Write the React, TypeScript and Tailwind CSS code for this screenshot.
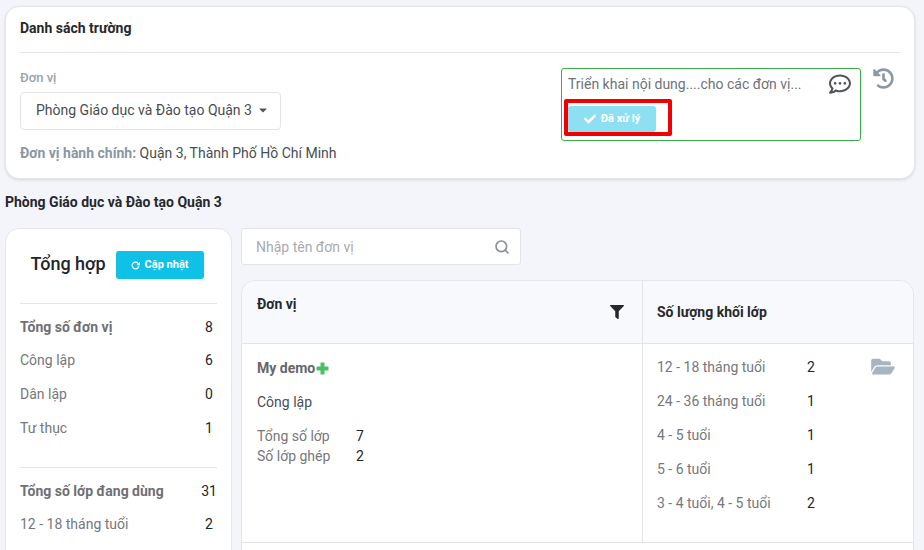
import React from "react";
import { FaHistory, FaRegCommentDots, FaCheck, FaFilter, FaFolderOpen, FaCaretDown } from "react-icons/fa";
import { FiSearch, FiRotateCw } from "react-icons/fi";

const summaryA = [
  ["Công lập", "6"],
  ["Dân lập", "0"],
  ["Tư thục", "1"],
];
const grades = [
  ["12 - 18 tháng tuổi", "2"],
  ["24 - 36 tháng tuổi", "1"],
  ["4 - 5 tuổi", "1"],
  ["5 - 6 tuổi", "1"],
  ["3 - 4 tuổi, 4 - 5 tuổi", "2"],
];

function Row({ label, value, bold }: { label: string; value: string; bold?: boolean }) {
  return (
    <div className={bold ? "flex h-[33px] items-center justify-between" : "flex h-[34px] items-center justify-between"}>
      <span className={bold ? "font-bold text-[#6f6f74]" : "text-[#77777c]"}>{label}</span>
      <span className="w-[16px] text-center text-[#212529]">{value}</span>
    </div>
  );
}

export default function App() {
  return (
    <div className="h-[550px] w-[924px] overflow-hidden bg-[#f3f5fb] pl-[5px] pt-[6px] text-[14px] leading-[20px] text-[#212529] [font-family:Roboto,sans-serif]">
      <div className="h-[173px] w-[910px] rounded-[14px] border border-[#e4e6ea] bg-white px-[14px] shadow-[0_1px_3px_rgba(0,0,0,0.12)]">
        <div className="flex h-[46px] items-center border-b border-[#e2e4e8] pb-[4px] font-bold text-[#26282c]">Danh sách trường</div>
        <div className="flex justify-between">
          <div>
            <div className="mt-[15px] text-[13px] font-medium text-[#9aa3ae]">Đơn vị</div>
            <div className="mt-[4px] flex h-[38px] w-[261px] items-center gap-[6px] rounded border border-[#e2e4e8] pb-[2px] pl-[15px] text-[#4a4d52]">
              Phòng Giáo dục và Đào tạo Quận 3
              <FaCaretDown className="h-[12px] w-[10px] text-[#55585d]" />
            </div>
            <div className="mt-[13px] text-[#4a4d52]">
              <span className="font-bold text-[#8b96a3]">Đơn vị hành chính:</span> Quận 3, Thành Phố Hồ Chí Minh
            </div>
          </div>
          <div className="mr-[6px] mt-[15px] flex items-start gap-[12px]">
            <div className="relative h-[73px] w-[300px] rounded-[3px] border border-[#3cab4a] px-[6px] pt-[4px]">
              <div className="flex items-center justify-between pr-[3px] text-[#6f7276]">
                <span>Triển khai nội dung....cho các đơn vị...</span>
                <FaRegCommentDots className="h-[22px] w-[22px] text-[#50555b]" />
              </div>
              <div className="mt-[11px] flex h-[26px] w-[88px] items-center justify-center gap-[5px] rounded-[3px] bg-[#8de0f2] text-[11px] font-bold text-white">
                <FaCheck className="h-[12px] w-[12px]" />
                Đã xử lý
              </div>
              <div className="absolute left-[2px] top-[30px] h-[37px] w-[108px] rounded-[2px] border-[4px] border-[#f00000]" />
            </div>
            <FaHistory className="h-[21px] w-[21px] text-[#8e98a5]" />
          </div>
        </div>
      </div>

      <div className="mt-[13px] h-[20px] text-[14px] font-bold text-[#26282c]">Phòng Giáo dục và Đào tạo Quận 3</div>

      <div className="mt-[16px] flex items-start gap-[9px]">
        <div className="h-[400px] w-[227px] shrink-0 rounded-[14px] border border-[#e4e6ea] bg-white px-[14px]">
          <div className="flex h-[75px] items-center justify-center gap-[10px] border-b border-[#e2e4e8] pb-[2px] pr-[3px]">
            <span className="-mt-[2px] text-[18px] font-medium text-[#212529]">Tổng hợp</span>
            <div className="flex h-[28px] w-[88px] items-center justify-center gap-[5px] rounded-[3px] bg-[#0fc1e6] text-[11px] font-bold text-white">
              <FiRotateCw className="h-[9px] w-[9px]" strokeWidth={3} />
              Cập nhật
            </div>
          </div>
          <div className="mt-[6px] border-b border-[#e2e4e8] pb-[22px]">
            <Row label="Tổng số đơn vị" value="8" bold />
            {summaryA.map(([l, v]) => (
              <Row key={l} label={l} value={v} />
            ))}
          </div>
          <div className="mt-[6px]">
            <Row label="Tổng số lớp đang dùng" value="31" bold />
            <Row label="12 - 18 tháng tuổi" value="2" />
            <Row label="24 - 36 tháng tuổi" value="1" />
          </div>
        </div>

        <div className="w-[673px]">
          <div className="flex h-[37px] w-[280px] items-center justify-between rounded-[3px] border border-[#e2e4e8] bg-white pl-[14px] pr-[10px] text-[#a9abae]">
            Nhập tên đơn vị
            <FiSearch className="h-[16px] w-[16px] text-[#8c8f93]" strokeWidth={2.5} />
          </div>
          <div className="mt-[15px] h-[300px] rounded-[14px] border border-[#e4e6ea] bg-white">
            <div className="flex h-[63px] rounded-t-[14px] border-b border-[#e2e4e8] bg-[#f8f9fc]">
              <div className="flex w-[401px] justify-between border-r border-[#e2e4e8] pl-[15px] pr-[18px]">
                <span className="mt-[13px] font-bold text-[#26282c]">Đơn vị</span>
                <FaFilter className="mt-[24px] h-[14px] w-[14px] text-[#26282c]" />
              </div>
              <div className="flex flex-1 items-center pl-[14px] font-bold text-[#26282c]">Số lượng khối lớp</div>
            </div>
            <div className="flex h-[199px] border-b border-[#e2e4e8]">
              <div className="w-[401px] border-r border-[#e2e4e8] pl-[15px] pt-[14px]">
                <div className="flex items-center font-bold text-[#66666b]">
                  My demo
                  <svg viewBox="0 0 13 13" className="ml-[1px] h-[13px] w-[13px] text-[#4cbf63]" fill="currentColor">
                    <path d="M4.5 1a.5.5 0 0 1 .5-.5h3a.5.5 0 0 1 .5.5v3.5H12a.5.5 0 0 1 .5.5v3a.5.5 0 0 1-.5.5H8.5V12a.5.5 0 0 1-.5.5H5a.5.5 0 0 1-.5-.5V8.5H1A.5.5 0 0 1 .5 8V5a.5.5 0 0 1 .5-.5h3.5z" />
                  </svg>
                </div>
                <div className="mt-[14px] text-[#4a4d52]">Công lập</div>
                <div className="mt-[14px] flex text-[#77777c]">
                  <span className="w-[99px]">Tổng số lớp</span>
                  <span className="text-[#212529]">7</span>
                </div>
                <div className="flex text-[#77777c]">
                  <span className="w-[99px]">Số lớp ghép</span>
                  <span className="text-[#212529]">2</span>
                </div>
              </div>
              <div className="relative flex-1 pl-[14px] pt-[13px]">
                <div className="flex flex-col gap-[14px]">
                  {grades.map(([l, v]) => (
                    <div key={l} className="flex text-[#77777c]">
                      <span className="w-[150px]">{l}</span>
                      <span className="text-[#212529]">{v}</span>
                    </div>
                  ))}
                </div>
                <FaFolderOpen className="absolute right-[18px] top-[12px] h-[21px] w-[24px] text-[#a9b4c2]" />
              </div>
            </div>
          </div>
        </div>
      </div>
    </div>
  );
}
